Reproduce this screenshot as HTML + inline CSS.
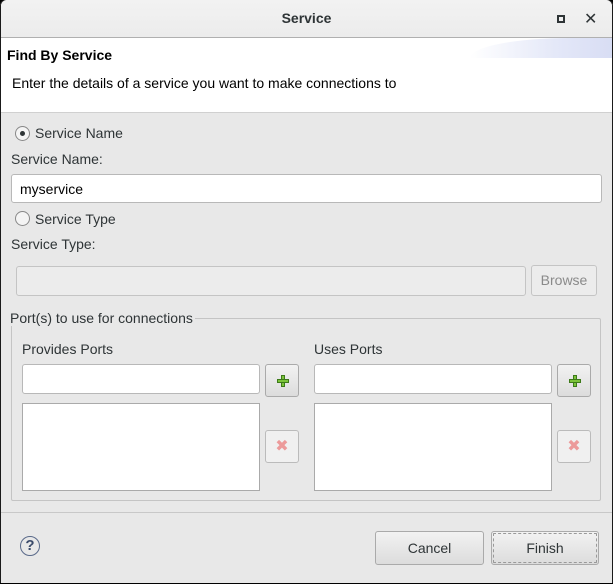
<!DOCTYPE html>
<html><head><style>
*{box-sizing:border-box;margin:0;padding:0}
body{width:613px;height:584px;overflow:hidden;font-family:"Liberation Sans","DejaVu Sans",sans-serif;font-size:14px;color:#2e3436;background:#000}
.win{position:absolute;left:0;top:0;width:613px;height:583px;background:#e8e8e8;border-radius:6px 6px 0 0;overflow:hidden;box-shadow:inset 1px 0 #1a1a1a,inset -1px 0 #1a1a1a}
.a{position:absolute}
.title{left:1px;top:0;width:611px;height:38px;background:linear-gradient(#f2f2f2,#ececec);border-bottom:1px solid #b0b0b0;border-radius:6px 6px 0 0}
.inp{background:#fff;border:1px solid #b8b8b8;border-radius:3px}
.btn{background:linear-gradient(#f2f2f2,#dcdcdc);border:1px solid #aaa;border-radius:3px;text-align:center}
.dis{background:#ececec;border:1px solid #c4c4c4;border-radius:3px}
.plus{position:absolute;left:11px;top:10px;width:12px;height:12px}
.plus:before{content:"";position:absolute;left:4px;top:0;width:4px;height:12px;background:#7cc43a;border:1px solid #3d7a1a;box-sizing:border-box}
.plus:after{content:"";position:absolute;left:0;top:4px;width:12px;height:4px;background:#7cc43a;border:1px solid #3d7a1a;box-sizing:border-box}
</style></head><body>
<div class="win">
<div class="a title"><div class="a" style="left:0;width:611px;top:10px;text-align:center;font-size:14px;font-weight:bold;color:#2e3436">Service</div>
<div class="a" style="left:556px;top:15px;width:8px;height:8px;border:2px solid #2e3436"></div>
<div class="a" style="left:583px;top:9px;font-size:16px;font-weight:bold">✕</div></div>
<div class="a" style="left:1px;top:38px;width:611px;height:75px;background:#fff;border-bottom:1px solid #d0d0d0"></div>
<div class="a" style="left:470px;top:38px;width:142px;height:20px;background:linear-gradient(90deg,#fff,#e4e8f8 60%,#d8ddf4);border-radius:100px 0 0 0/20px 0 0 0"></div>
<div class="a" style="left:7px;top:47px;font-weight:bold;font-size:14px;color:#000">Find By Service</div>
<div class="a" style="left:12px;top:75px;color:#000">Enter the details of a service you want to make connections to</div>
<div class="a" style="left:15px;top:126px;width:15px;height:15px;border-radius:50%;border:1px solid #888;background:#f4f4f4"><div class="a" style="left:4px;top:4px;width:5px;height:5px;border-radius:50%;background:#2e3436"></div></div>
<div class="a" style="left:35px;top:125px">Service Name</div>
<div class="a" style="left:11px;top:151px">Service Name:</div>
<div class="a inp" style="left:11px;top:174px;width:591px;height:29px"><div class="a" style="left:8px;top:6px;color:#000">myservice</div></div>
<div class="a" style="left:15px;top:211px;width:15px;height:15px;border-radius:50%;border:1px solid #888;background:#f4f4f4"></div>
<div class="a" style="left:35px;top:211px">Service Type</div>
<div class="a" style="left:11px;top:236px">Service Type:</div>
<div class="a dis" style="left:16px;top:266px;width:510px;height:30px"></div>
<div class="a dis" style="left:531px;top:265px;width:66px;height:31px;color:#8a8a8a;text-align:center;line-height:29px">Browse</div>
<div class="a" style="left:11px;top:318px;width:590px;height:183px;border:1px solid #c4c4c4;border-radius:2px"></div>
<div class="a" style="left:10px;top:310px;background:#e8e8e8;padding-right:2px">Port(s) to use for connections</div>
<div class="a" style="left:22px;top:341px">Provides Ports</div>
<div class="a" style="left:314px;top:341px">Uses Ports</div>
<div class="a inp" style="left:22px;top:364px;width:238px;height:30px"></div>
<div class="a inp" style="left:314px;top:364px;width:238px;height:30px"></div>
<div class="a" style="left:22px;top:403px;width:238px;height:88px;background:#fff;border:1px solid #aaa"></div>
<div class="a" style="left:314px;top:403px;width:238px;height:88px;background:#fff;border:1px solid #aaa"></div>
<div class="a btn" style="left:265px;top:364px;width:34px;height:33px"><div class="plus"></div></div>
<div class="a btn" style="left:557px;top:364px;width:34px;height:33px"><div class="plus"></div></div>
<div class="a" style="left:265px;top:430px;width:34px;height:33px;background:#f0f0f0;border:1px solid #bbb;border-radius:3px;color:#ec9a9a;font-weight:bold;font-size:16px;text-align:center;line-height:31px">✖</div>
<div class="a" style="left:557px;top:430px;width:34px;height:33px;background:#f0f0f0;border:1px solid #bbb;border-radius:3px;color:#ec9a9a;font-weight:bold;font-size:16px;text-align:center;line-height:31px">✖</div>
<div class="a" style="left:1px;top:512px;width:611px;height:1px;background:#c8c8c8"></div>
<div class="a" style="left:20px;top:536px;width:20px;height:20px;border-radius:50%;border:1.5px solid #5a6a8a;color:#3a4a6a;font-weight:bold;font-size:15px;text-align:center;line-height:18px">?</div>
<div class="a btn" style="left:375px;top:531px;width:109px;height:34px;line-height:32px">Cancel</div>
<div class="a btn" style="left:491px;top:531px;width:108px;height:34px;line-height:32px;outline:1px dashed #999;outline-offset:-3px">Finish</div>
</div>
</body></html>
